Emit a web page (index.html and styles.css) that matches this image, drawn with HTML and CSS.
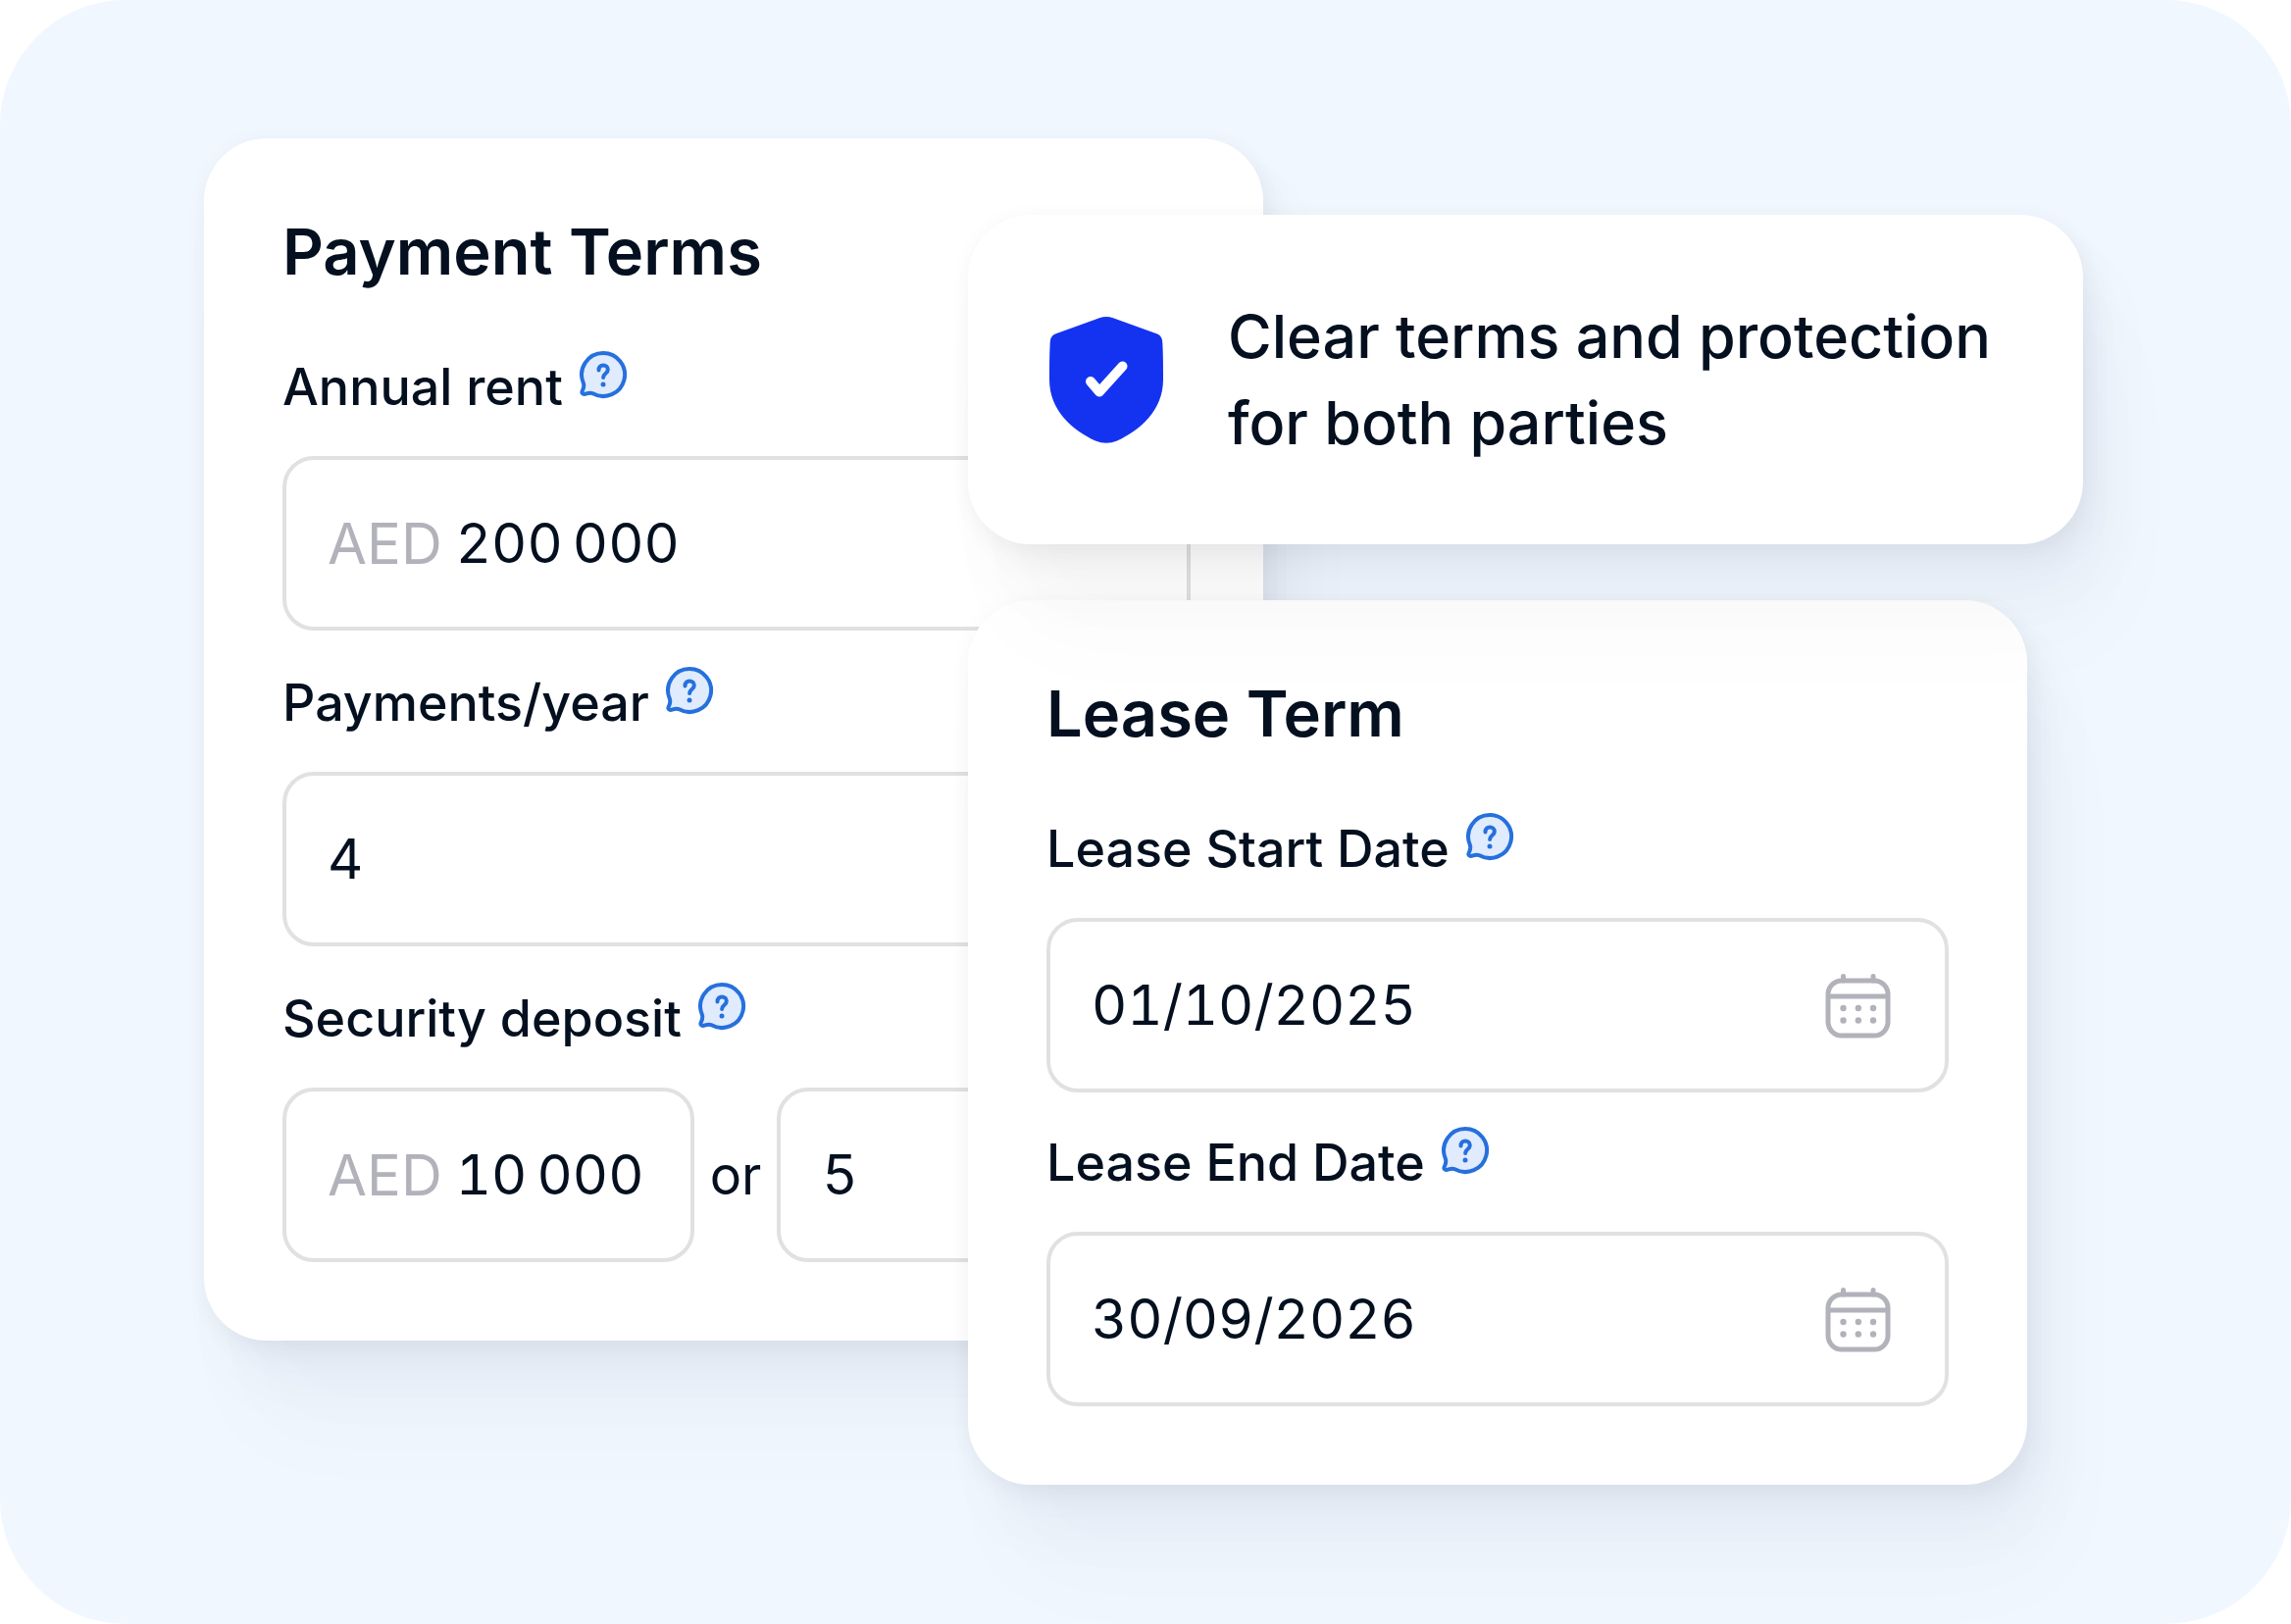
FILE: index.html
```html
<!DOCTYPE html>
<html lang="en">
<head>
<meta charset="utf-8">
<meta name="viewport" content="width=device-width, initial-scale=1">
<title>Lease contract terms</title>
<link rel="stylesheet" href="styles.css">
</head>
<body>
<svg class="sprite" aria-hidden="true">
  <symbol id="icon-help" viewBox="0 0 50 50">
    <path d="M25 3a22 22 0 1 1-10.500 41.300c-2.500-1.300-4.500-.6-6.500.1-1 .4-2 .6-3 .4-1.300-.3-1.900-1.500-1.400-2.800 1.500-3.500 2.600-5 1.200-8.500A22 22 0 0 1 25 3z" fill="#e0ebfe" stroke="#2670dd" stroke-width="4" stroke-linejoin="round"/>
    <path d="M20.500 20.500c0-3.300 2-5 4.600-5 2.700 0 4.700 1.800 4.700 4.400 0 4-4.700 3.600-4.700 8.100" fill="none" stroke="#2670dd" stroke-width="4" stroke-linecap="round" stroke-linejoin="round"/>
    <circle cx="25" cy="35" r="2.500" fill="#2670dd"/>
  </symbol>
  <symbol id="icon-calendar" viewBox="0 0 68 68">
    <g fill="none" stroke="#b2b2bb" stroke-width="5">
      <rect x="3" y="9" width="61" height="56" rx="14"/>
      <path d="M4 25h59"/>
      <path d="M18.500 9V4.500M49 9V4.500" stroke-linecap="round"/>
    </g>
    <g fill="#b2b2bb">
      <circle cx="18.500" cy="37" r="3.200"/><circle cx="33.800" cy="37" r="3.200"/><circle cx="49" cy="37" r="3.200"/>
      <circle cx="18.500" cy="49.500" r="3.200"/><circle cx="33.800" cy="49.500" r="3.200"/><circle cx="49" cy="49.500" r="3.200"/>
    </g>
  </symbol>
</svg>

<main class="stage">
  <section class="card payment" aria-labelledby="payment-title">
    <h2 class="card-title" id="payment-title">Payment Terms</h2>
    <div class="fields">
      <div class="field">
        <div class="field-head">
          <label for="rent">Annual rent</label>
          <button class="help" type="button" aria-label="About annual rent"><svg><use href="#icon-help"/></svg></button>
        </div>
        <div class="control"><span class="prefix">AED</span><input id="rent" type="text" value="200&#8201;000"></div>
      </div>
      <div class="field">
        <div class="field-head">
          <label for="payments">Payments/year</label>
          <button class="help" type="button" aria-label="About payments per year"><svg><use href="#icon-help"/></svg></button>
        </div>
        <div class="control"><input id="payments" type="text" value="4"></div>
      </div>
      <div class="field">
        <div class="field-head">
          <label for="deposit">Security deposit</label>
          <button class="help" type="button" aria-label="About the security deposit"><svg><use href="#icon-help"/></svg></button>
        </div>
        <div class="control-row">
          <div class="control"><span class="prefix">AED</span><input id="deposit" type="text" value="10&#8201;000"></div>
          <span class="or">or</span>
          <div class="control"><input type="text" value="5" aria-label="Security deposit, percent"></div>
        </div>
      </div>
    </div>
  </section>

  <div class="side">
    <section class="card notice">
      <svg class="shield" viewBox="0 0 116 130" aria-hidden="true">
        <path d="M51 2.200Q58 -.4 65 2.200L110 18.500Q115 20.500 115.300 27C116 40 116 52 116 65C116 97 92 117 69 127.500Q58 132 47 127.500C24 117 0 97 0 65C0 52 0 40 .7 27Q1 20.500 6 18.500Z" fill="#1433f0"/>
        <path d="M42 67L51 77.500L74.500 51.500" fill="none" stroke="#fff" stroke-width="10" stroke-linecap="round" stroke-linejoin="round"/>
      </svg>
      <p class="notice-text">Clear terms and protection<br>for both parties</p>
    </section>

    <section class="card lease" aria-labelledby="lease-title">
      <h2 class="card-title" id="lease-title">Lease Term</h2>
      <div class="fields">
        <div class="field">
          <div class="field-head">
            <label for="start">Lease Start Date</label>
            <button class="help" type="button" aria-label="About the lease start date"><svg><use href="#icon-help"/></svg></button>
          </div>
          <div class="control"><input id="start" type="text" value="01/10/2025"><button class="picker" type="button" aria-label="Pick the start date"><svg><use href="#icon-calendar"/></svg></button></div>
        </div>
        <div class="field">
          <div class="field-head">
            <label for="end">Lease End Date</label>
            <button class="help" type="button" aria-label="About the lease end date"><svg><use href="#icon-help"/></svg></button>
          </div>
          <div class="control"><input id="end" type="text" value="30/09/2026"><button class="picker" type="button" aria-label="Pick the end date"><svg><use href="#icon-calendar"/></svg></button></div>
        </div>
      </div>
    </section>
  </div>
</main>
</body>
</html>
```
FILE: styles.css
```css
* {
  box-sizing: border-box;
}

body {
  margin: 0;
  background: #fff;
  color: #04101f;
  font-family: Inter, "Liberation Sans", sans-serif;
}

.sprite {
  display: none;
}

button {
  flex: none;
  padding: 0;
  border: 0;
  background: none;
  cursor: pointer;
}

button svg {
  display: block;
  width: 100%;
  height: 100%;
}

/* The two columns share the third track, so the right one laps over the left. */
.stage {
  display: grid;
  grid-template-columns: 208fr 779fr 301fr 836fr 212fr;
  align-items: start;
  min-height: 100vh;
  padding: 141px 0;
  border-radius: 128px;
  background: #f0f7ff;
  overflow: hidden;
}

.card {
  border-radius: 64px;
  background: #fff;
  box-shadow:
    0 2px 24px rgba(16, 16, 48, 0.03),
    10px 14px 32px rgba(16, 16, 32, 0.04),
    24px 48px 64px rgba(16, 16, 48, 0.03),
    36px 100px 100px rgba(16, 16, 64, 0.02);
}

.payment {
  grid-area: 1 / 2 / 2 / 4;
  padding: 80px 74px 80px 80px;
}

.side {
  grid-area: 1 / 3 / 2 / 5;
  display: flex;
  flex-direction: column;
  gap: 57px;
  padding-top: 78px;
}

.notice {
  position: relative;
  z-index: 1;
  display: flex;
  align-items: center;
  gap: 66px;
  padding: 80px 83px;
}

.shield {
  flex: none;
  width: 116px;
  height: 130px;
}

.notice-text {
  margin: 0;
  font-size: 61px;
  font-weight: 500;
  line-height: 88px;
  white-space: nowrap;
}

.lease {
  width: 95%;
  padding: 80px;
}

.card-title {
  margin: 0 0 72px;
  font-size: 65px;
  font-weight: 600;
  line-height: 72px;
}

.fields {
  display: flex;
  flex-direction: column;
  gap: 42px;
}

.payment .fields {
  gap: 44px;
}

.field {
  display: flex;
  flex-direction: column;
  gap: 40px;
}

.field-head {
  display: flex;
  align-items: flex-start;
  gap: 16px;
  height: 60px;
  font-size: 52px;
  font-weight: 500;
  line-height: 60px;
}

.help {
  width: 50px;
  height: 50px;
  margin-top: -8px;
}

.control {
  display: flex;
  align-items: center;
  gap: 14px;
  min-width: 0;
  height: 178px;
  padding: 0 54px 0 42px;
  border: 4px solid #e1e1e2;
  border-radius: 32px;
  background: #fff;
  font-size: 56px;
  font-variant-numeric: tabular-nums;
}

.control input {
  flex: 1;
  min-width: 0;
  width: 100%;
  padding: 0;
  border: 0;
  outline: 0;
  background: none;
  color: inherit;
  font: inherit;
  font-variant-numeric: inherit;
}

.prefix {
  color: #b2b2bb;
  font-size: 58px;
}

.picker {
  width: 68px;
  height: 68px;
}

.control-row {
  display: grid;
  grid-template-columns: 420fr auto 422fr;
  align-items: center;
  gap: 16px;
}

.control-row .control {
  padding-right: 30px;
}

.or {
  font-size: 54px;
}
```
